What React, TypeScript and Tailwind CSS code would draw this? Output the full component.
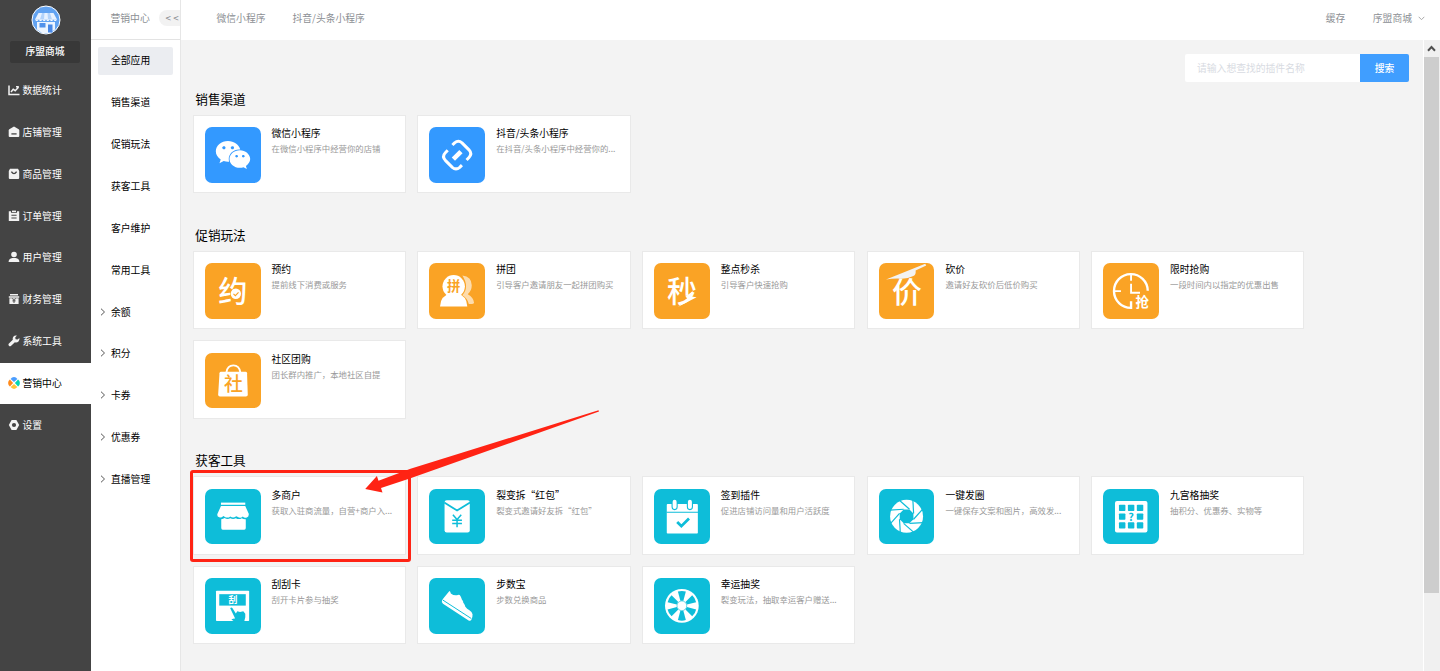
import type { ReactNode } from "react"
import { FaWeixin } from "react-icons/fa"

type Plugin = { title: string; desc: string; color: string; icon: ReactNode; marked?: boolean }

const BLUE = "bg-[#3399ff]"
const ORANGE = "bg-[#faa325]"
const CYAN = "bg-[#0ebdd9]"

function Glyph({ children }: { children: ReactNode }) {
  return (
    <svg viewBox="0 0 56 56" className="size-full" fill="#fff">
      {children}
    </svg>
  )
}

function SideGlyph({ children }: { children: ReactNode }) {
  return (
    <svg viewBox="0 0 12 12" className="size-3 shrink-0" fill="#f2f2f2">
      {children}
    </svg>
  )
}

const sideMenu: { label: string; active?: boolean; icon: ReactNode }[] = [
  {
    label: "数据统计",
    icon: (
      <SideGlyph>
        <path d="M1 1.500v9h10.500M3 8l2.200-2.800 2 1.500 3.300-3.400M8 2.800h2.800" fill="none" stroke="#f2f2f2" strokeWidth="1.500" />
      </SideGlyph>
    ),
  },
  {
    label: "店铺管理",
    icon: (
      <SideGlyph>
        <path d="M6 .5 10.700 3.300Q11.300 3.800 11.300 4.600V10q0 1-1 1H1.700q-1 0-1-1V4.600q0-.8.6-1.300Z" />
        <path d="M3.400 7.900h5.200" stroke="#444" strokeWidth="1.300" />
      </SideGlyph>
    ),
  },
  {
    label: "商品管理",
    icon: (
      <SideGlyph>
        <path d="M2 .8h8l1.200 2.200V10q0 1-1 1H1.800q-1 0-1-1V3Z" />
        <path d="M3.400 3.600q2.600 4 5.200 0" fill="none" stroke="#444" strokeWidth="1.400" />
      </SideGlyph>
    ),
  },
  {
    label: "订单管理",
    icon: (
      <SideGlyph>
        <path d="M.8 1.200h2.200v1.600h6V1.200h2.200V11H.8Z" />
        <path d="M4 .6h4v1.400H4Z" />
        <path d="M3.400 5.200h5.200M3.400 8h5.200" stroke="#444" strokeWidth="1.100" />
      </SideGlyph>
    ),
  },
  {
    label: "用户管理",
    icon: (
      <SideGlyph>
        <circle cx="6" cy="3.500" r="2.800" />
        <path d="M.6 11q0-3.600 3.800-4h3.200q3.800.4 3.800 4Z" />
      </SideGlyph>
    ),
  },
  {
    label: "财务管理",
    icon: (
      <SideGlyph>
        <path d="M2 1h8v1.400H2ZM.8 3.200h10.400v1.500H.8ZM1.400 5.200h9.200V11H1.400Z" />
        <path d="m4.400 5.400 1.600 2 1.600-2M4.400 7.900h3.200M6 7.200v2.800" fill="none" stroke="#444" strokeWidth=".9" />
      </SideGlyph>
    ),
  },
  {
    label: "系统工具",
    icon: (
      <SideGlyph>
        <path d="M11.400 3 9.600 4.600 7.600 4.300 7.200 2.500 8.900.6Q6.700.1 5.300 1.700 4.300 3 4.800 4.800L.7 8.700q-.7 1.100.2 2 .9.900 2 .2L6.900 7.200q2.100.6 3.600-.8 1.300-1.400.9-3.400Z" />
      </SideGlyph>
    ),
  },
  {
    label: "营销中心",
    active: true,
    icon: (
      <SideGlyph>
        <path d="M6 5.100 2.600 1.900Q3.900.1 6 .1T9.400 1.900Z" fill="#4a9dff" />
        <path d="M6.900 6 10.100 2.600Q11.900 3.900 11.900 6T10.100 9.400Z" fill="#00d6b4" />
        <path d="M6 6.900 2.600 10.100Q3.900 11.900 6 11.900T9.400 10.100Z" fill="#ffc53a" />
        <path d="M5.100 6 1.900 2.600Q.1 3.900 .1 6T1.900 9.400Z" fill="#ff8a1c" />
      </SideGlyph>
    ),
  },
  {
    label: "设置",
    icon: (
      <SideGlyph>
        <path d="M3.600.9h4.800L11.200 6 8.400 11.100H3.600L.8 6Z" />
        <circle cx="6" cy="6" r="2.100" fill="#444" />
      </SideGlyph>
    ),
  },
]

const subMenu: { label: string; active?: boolean; expandable?: boolean }[] = [
  { label: "全部应用", active: true },
  { label: "销售渠道" },
  { label: "促销玩法" },
  { label: "获客工具" },
  { label: "客户维护" },
  { label: "常用工具" },
  { label: "余额", expandable: true },
  { label: "积分", expandable: true },
  { label: "卡券", expandable: true },
  { label: "优惠券", expandable: true },
  { label: "直播管理", expandable: true },
]

const sections: { title: string; plugins: Plugin[] }[] = [
  {
    title: "销售渠道",
    plugins: [
      {
        title: "微信小程序",
        desc: "在微信小程序中经营你的店铺",
        color: BLUE,
        icon: <FaWeixin className="w-[36px] h-[32px] text-white" />,
      },
      {
        title: "抖音/头条小程序",
        desc: "在抖音/头条小程序中经营你的...",
        color: BLUE,
        icon: (
          <Glyph>
            <g fill="none" stroke="#fff" strokeWidth="3">
              <path d="M23.500 18.200 25.700 16Q29.500 12.800 33.200 16l7 7q3.600 4 0 7.700L37.800 33.200" />
              <path d="M33.100 38.400 30.900 40.600Q27.100 43.800 23.400 40.600l-7-7Q12.800 29.600 16.400 25.900L18.800 23.400" />
            </g>
            <path d="m24.500 32.300 7.600-7.600" stroke="#fff" strokeWidth="4.600" />
          </Glyph>
        ),
      },
    ],
  },
  {
    title: "促销玩法",
    plugins: [
      {
        title: "预约",
        desc: "提前线下消费或服务",
        color: ORANGE,
        icon: (
          <Glyph>
            <text x="28" y="39" fontSize="29.500" fontWeight="500" textAnchor="middle">约</text>
            <circle cx="31" cy="31" r="5.200" />
            <path d="m28.600 31 1.900 1.900 3.200-3.400" fill="none" stroke="#faa325" strokeWidth="1.100" />
          </Glyph>
        ),
      },
      {
        title: "拼团",
        desc: "引导客户邀请朋友一起拼团购买",
        color: ORANGE,
        icon: (
          <Glyph>
            <path d="M33.500 12.500Q43 13.500 43 22.500 43 28 39 31.500 45 35 45.300 40 45 41.200 43 41.200H40Q39 36 33.500 32.500 41 24 33.500 12.500Z" opacity=".62" />
            <path d="M11 43.800Q11.500 32.500 22 31h6q10 1.500 10.500 12.800Z" />
            <circle cx="24.800" cy="23.500" r="11.300" />
            <text x="24.800" y="28.300" fontSize="13.500" fontWeight="700" fill="#faa325" textAnchor="middle">拼</text>
          </Glyph>
        ),
      },
      {
        title: "整点秒杀",
        desc: "引导客户快速抢购",
        color: ORANGE,
        icon: (
          <Glyph>
            <text x="28" y="39" fontSize="30" fontWeight="500" textAnchor="middle">秒</text>
            <path d="M39.500 28 36 33.500 42.800 34.500 24.300 44 33.500 35.500 31.500 34Z" />
          </Glyph>
        ),
      },
      {
        title: "砍价",
        desc: "邀请好友砍价后低价购买",
        color: ORANGE,
        icon: (
          <Glyph>
            <text x="28" y="40" fontSize="30" fontWeight="500" textAnchor="middle">价</text>
            <path d="M7 16.500 46.500.8 47.500 2.500 36.800 7.500Q37.500 11.500 34.500 13.200 29 16 22 15.800 14 15.500 7 16.500Z" fill="#f3f3f3" />
          </Glyph>
        ),
      },
      {
        title: "限时抢购",
        desc: "一段时间内以指定的优惠出售",
        color: ORANGE,
        icon: (
          <Glyph>
            <g fill="none" stroke="#fff" strokeWidth="2.400">
              <path d="M45 28A17 17 0 1 0 28.200 45.200V38.500" />
              <path d="M28.200 11v7M11 28.300h7M28.200 21v9h9" strokeWidth="1.900" />
            </g>
            <text x="39.500" y="44.500" fontSize="13.500" fontWeight="700" textAnchor="middle">抢</text>
          </Glyph>
        ),
      },
      {
        title: "社区团购",
        desc: "团长群内推广，本地社区自提",
        color: ORANGE,
        icon: (
          <Glyph>
            <path d="M16.200 19h24.600q1.400 0 1.500 1.400l.7 21.600q0 1.800-1.800 1.800H15q-1.800 0-1.800-1.800l1.300-21.600q.1-1.400 1.700-1.400Z" />
            <path d="M21.500 19.500Q22.500 12.500 28.500 12.500T35.500 19.500" fill="none" stroke="#fff" strokeWidth="1.900" />
            <text x="28.500" y="38.500" fontSize="19" fontWeight="500" fill="#faa325" textAnchor="middle">社</text>
          </Glyph>
        ),
      },
    ],
  },
  {
    title: "获客工具",
    plugins: [
      {
        title: "多商户",
        desc: "获取入驻商流量，自营+商户入...",
        color: CYAN,
        marked: true,
        icon: (
          <Glyph>
            <path d="M16 13.700h24.500v2.200H16Z" />
            <path d="M16 17.200h24.500L44 25q.3 2.700-2 3.800-2.500.8-4-1.200-2.300 2.400-5 .6-1.200-.8-2-.6-2.800 2.200-5.600 0-2.700 2.200-5.800.3-1-.9-1.400-.5-1.700 1.700-4 1.100-2.500-1-1.700-3.500Z" />
            <path d="M16.300 30.500q2-.2 3.300-1.300 3 1.700 5.800.2 2.800 1.500 5.600 0 3.200 1.700 6 0 1.700 1.200 4 1v9q0 1.600-1.500 1.600H17.800q-1.500 0-1.500-1.600Z" />
          </Glyph>
        ),
      },
      {
        title: "裂变拆“红包”",
        desc: "裂变式邀请好友拆“红包”",
        color: CYAN,
        icon: (
          <Glyph>
            <rect x="15.600" y="11.300" width="25.400" height="32.500" rx="2.200" />
            <path d="M15.300 13.500 28.200 21.700 41.300 13.500" fill="none" stroke="#0ebdd9" strokeWidth="1.800" />
            <path d="m24 26 4.200 4.800 4.200-4.800M28.200 30.500v8M23.300 31.500h9.800M23.300 34.700h9.800" fill="none" stroke="#0ebdd9" strokeWidth="1.500" />
          </Glyph>
        ),
      },
      {
        title: "签到插件",
        desc: "促进店铺访问量和用户活跃度",
        color: CYAN,
        icon: (
          <Glyph>
            <rect x="12.800" y="15.200" width="31.300" height="29.600" rx=".8" />
            <path d="M12.500 23.400h32" stroke="#0ebdd9" strokeWidth="1.200" />
            <path d="M20.700 12.800v5.400M36.100 12.800v5.400" stroke="#0ebdd9" strokeWidth="6.200" strokeLinecap="round" />
            <path d="M20.700 12.800v5.400M36.100 12.800v5.400" stroke="#fff" strokeWidth="4" strokeLinecap="round" />
            <path d="m23.300 33.200 4.200 4.200 7.700-7.700" fill="none" stroke="#0ebdd9" strokeWidth="2.800" />
          </Glyph>
        ),
      },
      {
        title: "一键发圈",
        desc: "一键保存文案和图片，高效发...",
        color: CYAN,
        icon: (
          <Glyph>
            <g transform="translate(27.700 27.500)">
              <circle r="16.600" />
              <path d="M6.900-2.900V2.900L2.900 6.900H-2.900L-6.900 2.900V-2.900L-2.900-6.900H2.900Z" fill="#0ebdd9" />
              {[0, 45, 90, 135, 180, 225, 270, 315].map((angle) => (
                <path key={angle} d="M6.300-17 7.100-2.900" transform={`rotate(${angle})`} fill="none" stroke="#0ebdd9" strokeWidth="1.200" />
              ))}
            </g>
          </Glyph>
        ),
      },
      {
        title: "九宫格抽奖",
        desc: "抽积分、优惠券、实物等",
        color: CYAN,
        icon: (
          <Glyph>
            <rect x="12" y="12" width="32.700" height="31.800" rx="2" />
            {[16, 25, 34].map((x) =>
              [15.800, 24.700, 33.600].map((y) =>
                x === 25 && y === 24.700 ? null : (
                  <rect key={`${x}-${y}`} x={x} y={y} width="6.500" height="6.300" rx=".8" fill="#0ebdd9" />
                )
              )
            )}
            <text x="28.300" y="32" fontSize="11" fontWeight="700" fill="#0ebdd9" textAnchor="middle">?</text>
          </Glyph>
        ),
      },
      {
        title: "刮刮卡",
        desc: "刮开卡片参与抽奖",
        color: CYAN,
        icon: (
          <Glyph>
            <rect x="11" y="12.800" width="33.400" height="30.600" rx=".8" />
            <rect x="14.300" y="16.300" width="26.700" height="11.500" fill="#0ebdd9" />
            <text x="28" y="25.500" fontSize="9" fontWeight="700" textAnchor="middle">刮</text>
            <path d="M25.300 30.500Q26.300 29 27.500 30.300L31 35.800 32.500 33.600 35.200 34.300 38.500 33.600 40.500 36V39.500L39.500 43.500H29L26.500 41.800Q28.500 40.600 30.300 40.800Z" fill="#0ebdd9" />
          </Glyph>
        ),
      },
      {
        title: "步数宝",
        desc: "步数兑换商品",
        color: CYAN,
        icon: (
          <Glyph>
            <path d="M14.500 20.500 20.500 13q1 .2 1.400 2.500 3.500 2.700 7.200 1.500 1.800-.4 2.600 1.400L37 29.500q1 1.500 3.300 2.700 3.200 2 3.500 4.300.3 2.500-1.300 5.900-1 1.300-2.700.4L14 26q-1.900-1.500-.8-3.500Z" />
            <path d="M14 22.300 42.500 40.800" stroke="#0ebdd9" strokeWidth="1" />
            <path d="m33 21.500 2.500-1.200M34.800 25l2.500-1.200M36.500 28.300l2.300-1.100" stroke="#0ebdd9" strokeWidth="1.300" />
          </Glyph>
        ),
      },
      {
        title: "幸运抽奖",
        desc: "裂变玩法，抽取幸运客户赠送...",
        color: CYAN,
        icon: (
          <Glyph>
            <g transform="translate(28 28)">
              <circle r="17" />
              {[0, 60, 120, 180, 240, 300].map((angle) => (
                <path key={angle} d="M-1.500-5-4-14.300Q0-15.600 4-14.300L1.500-5Z" transform={`rotate(${angle})`} fill="#0ebdd9" />
              ))}
              <circle r="4.900" stroke="#0ebdd9" strokeWidth=".6" />
            </g>
          </Glyph>
        ),
      },
    ],
  },
]

function Sidebar() {
  return (
    <aside className="w-[91px] shrink-0 bg-[#444444] flex flex-col items-center">
      <svg viewBox="0 0 30 30" className="size-[30px] mt-[5px] shrink-0">
        <circle cx="15" cy="15" r="14" fill="#62a3f2" stroke="#fff" strokeWidth="1" />
        <path d="M7.500 8h15l3.500 6.500H4Z" fill="#e9f2ff" />
        <path d="M11 8h2.500l-.5 6.500H9ZM16.500 8H19l2 6.500h-4Z" fill="#b3d3fb" />
        <path d="M4 14.500q1.800 3 3.700 0 1.800 3 3.700 0 1.800 3 3.600 0 1.800 3 3.700 0 1.800 3 3.700 0 1.800 3 3.600 0Z" fill="#fff" />
        <path d="M6 17h18v7.500l-5 3.500h-8l-5-3.500Z" fill="#edf5ff" />
        <rect x="8.500" y="18" width="6" height="4.500" fill="#5292ea" />
        <rect x="17" y="19.500" width="4.500" height="8" fill="#4a89e6" />
      </svg>
      <div className="mt-[6px] mr-[1px] h-[22px] w-[70px] shrink-0 rounded-xs bg-[#383838] text-center leading-[21px] font-medium text-white">序盟商城</div>
      <nav className="mt-[6.600px] w-full">
        {sideMenu.map((item) => (
          <div
            key={item.label}
            className={`flex h-[41.85px] items-center gap-[3px] pb-px pl-[7.500px] ${item.active ? "bg-white text-black" : "text-white"}`}
          >
            {item.icon}
            <span>{item.label}</span>
          </div>
        ))}
      </nav>
    </aside>
  )
}

function SubSidebar() {
  return (
    <aside className="w-[90px] shrink-0 border-r border-[#e6e6e6] bg-white">
      <div className="flex h-10 items-center justify-between border-b border-[#e3e3e3] pl-[19.500px] pb-[3px] text-[#8c8f94]">
        <span>营销中心</span>
        <span className="h-4 w-[21px] rounded-l-full bg-[#f2f2f2] pl-[6.500px] leading-4 whitespace-nowrap">&lt; &lt;</span>
      </div>
      <nav className="flex flex-col gap-[13.85px] pt-[7.200px] pl-[7px]">
        {subMenu.map((item) => (
          <div
            key={item.label}
            className={`flex h-7 w-[75px] items-center rounded-xs pb-[1.500px] text-black ${item.active ? "bg-[#ebedf1]" : ""}`}
          >
            <span className="flex w-[13px] pl-[2px]">
              {item.expandable && (
                <svg viewBox="0 0 6 8" className="h-2 w-1.5" fill="none" stroke="#444" strokeWidth=".9">
                  <path d="m1 .7 3.500 3.300L1 7.300" />
                </svg>
              )}
            </span>
            <span>{item.label}</span>
          </div>
        ))}
      </nav>
    </aside>
  )
}

function Topbar() {
  return (
    <header className="flex h-10 shrink-0 items-center bg-white pr-[15px] pb-[4px] pl-[35.500px] text-[#8c8f94]">
      <span>微信小程序</span>
      <span className="ml-[27px]">抖音/头条小程序</span>
      <span className="ml-auto">缓存</span>
      <span className="ml-[27.500px]">序盟商城</span>
      <svg viewBox="0 0 7 5" className="ml-[6px] h-[5px] w-[7px]" fill="none" stroke="#a0a0a0" strokeWidth=".9">
        <path d="m.7.800 2.800 2.900L6.300.800" />
      </svg>
    </header>
  )
}

// red frame and arrow that point out the multi-merchant plugin
function Marker() {
  return (
    <>
      <div className="absolute -top-[7.500px] -left-[4px] h-[92px] w-[221px] rounded-[3px] border-3 border-[#ff2314]" />
      <svg viewBox="0 0 240 90" className="absolute -top-[71px] left-[168px] z-10 h-[90px] w-[240px]" fill="#ff2314">
        <path d="M3.200 83 14.900 70 16.500 74.800 48.500 62.700 236.500 4.300 237 5.500 48.500 72.300 19 82 20.500 86.400Z" />
      </svg>
    </>
  )
}

function PluginCard({ plugin }: { plugin: Plugin }) {
  return (
    <div className="relative flex h-[78.300px] border border-[#e9e9e9] bg-white pt-[11.300px] pl-[11px]">
      <div className={`flex h-[55.600px] w-[55.74px] shrink-0 items-center justify-center rounded-[7px] ${plugin.color}`}>{plugin.icon}</div>
      <div className="pl-[11px] whitespace-nowrap">
        <div className="h-[14px] leading-[12px] text-black">{plugin.title}</div>
        <div className="text-[8.4px] leading-[15px] text-[#999999]">{plugin.desc}</div>
      </div>
      {plugin.marked && <Marker />}
    </div>
  )
}

function App() {
  return (
    <div className="flex h-[671px] w-[1440px] overflow-hidden text-[9.8px] leading-[14px] font-['Noto_Sans_CJK_SC','Open_Sans',sans-serif]">
      <Sidebar />
      <SubSidebar />
      <div className="flex min-w-0 flex-1 flex-col">
        <Topbar />
        <div className="flex min-h-0 flex-1">
          <main className="flex-1 overflow-hidden bg-[#f3f3f3] pt-[14px] pl-[11.800px]">
            <div className="mr-[14px] mb-[6.900px] flex h-7 justify-end">
              <div className="w-[175px] rounded-l-xs bg-white pl-3 leading-[29px] text-[#d8dbe2]">请输入想查找的插件名称</div>
              <div className="w-[49px] rounded-r-xs bg-[#409eff] text-center leading-[29px] font-medium text-white">搜索</div>
            </div>
            {sections.map((section) => (
              <section key={section.title} className="mb-[31.600px]">
                <h2 className="mb-[6.100px] h-5 pl-[2.500px] text-[12.6px] leading-[19px] text-black">{section.title}</h2>
                <div className="grid grid-cols-[repeat(5,213.2px)] gap-x-[11.45px] gap-y-[11.100px]">
                  {section.plugins.map((plugin) => (
                    <PluginCard key={plugin.title} plugin={plugin} />
                  ))}
                </div>
              </section>
            ))}
          </main>
          <div className="flex w-[17px] shrink-0 flex-col border-l border-white bg-[#f0f0f0]">
            <svg viewBox="0 0 16 17" className="h-[17px] w-4" fill="none" stroke="#505050" strokeWidth="2">
              <path d="m4 10.700 3.500-3.700L11 10.700" />
            </svg>
            <div className="h-[536px] w-[15px] bg-[#cdcdcd]" />
          </div>
        </div>
      </div>
    </div>
  )
}

export default App
